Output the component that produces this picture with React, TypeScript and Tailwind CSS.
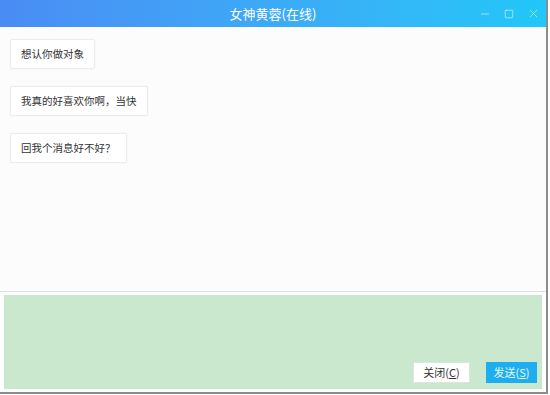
import { Minus, Square, X } from 'lucide-react'

const messages = ['想认你做对象', '我真的好喜欢你啊，当快', '回我个消息好不好？']

const font = { fontFamily: '"Microsoft YaHei", "Noto Sans CJK SC", sans-serif' }

function Bubble({ text }: { text: string }) {
    return (
        <div className="self-start h-[30px] flex items-center px-[10px] bg-white border border-[#ececec] rounded-[2px] shadow-[0_0_2px_rgba(0,0,0,0.06)] text-[10.5px] text-[#333]">
            {text}
        </div>
    )
}

export default function App() {
    return (
        <div className="w-[550px] h-[395px] bg-white" style={font}>
            <div className="w-[548px] h-[394px] flex flex-col border-r-2 border-b-2 border-[#8c8c8c]">
                {/* title bar */}
                <div className="relative h-[27px] shrink-0 flex items-center justify-center bg-gradient-to-r from-[#4a8cf4] to-[#21c7f8]">
                    <span className="text-[13px] text-white">女神黄蓉(在线)</span>
                    <div className="absolute right-[6px] top-0 h-full flex items-center gap-[13px] text-white/70">
                        <Minus size={12} strokeWidth={1.5} />
                        <Square size={10} strokeWidth={1.8} />
                        <X size={13} strokeWidth={1.3} />
                    </div>
                </div>

                {/* messages */}
                <div className="h-[265px] shrink-0 flex flex-col gap-[17px] pl-[10px] pt-[12px] bg-[#fcfcfc] border-b border-[#d9e1e6]">
                    {messages.map((m, i) => (
                        <Bubble key={i} text={m} />
                    ))}
                </div>

                {/* input area */}
                <div className="flex-1 px-[4px] pt-[3px] pb-[3px] bg-white">
                    <div className="h-full bg-[#c9e8cd] flex items-end justify-end gap-[16px] pr-[5px] pb-[6px]">
                        <button className="w-[57px] h-[21px] bg-white text-[11px] text-[#333] border border-[#e2e2e2]">
                            关闭(<span className="underline">C</span>)
                        </button>
                        <button className="w-[51px] h-[21px] bg-[#1eaef0] text-[11px] text-white/90">
                            发送(<span className="underline">S</span>)
                        </button>
                    </div>
                </div>
            </div>
        </div>
    )
}
